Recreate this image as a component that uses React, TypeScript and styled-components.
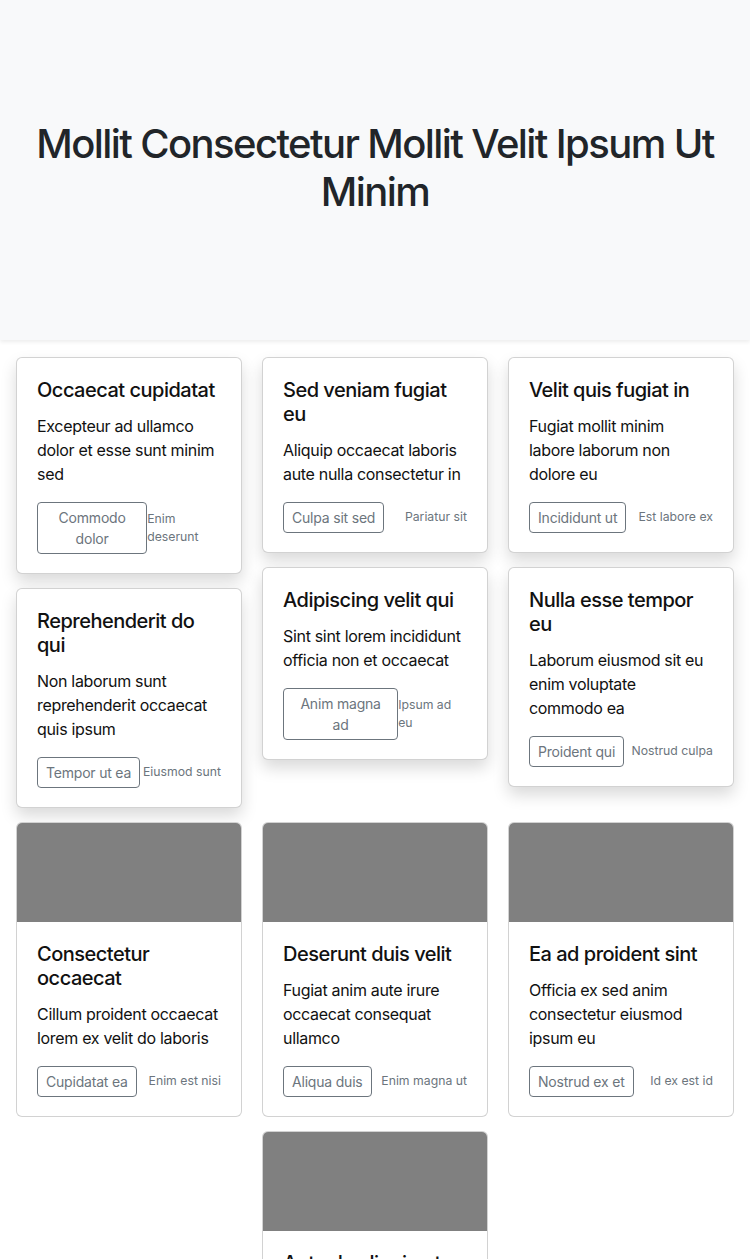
import styled, { createGlobalStyle } from "styled-components";

const GlobalStyle = createGlobalStyle`
	* {
		box-sizing: border-box;
	}
	body {
		margin: 0;
		background: #ffffff;
		color: #212529;
		font-family: Inter, "Noto Sans", "Liberation Sans", sans-serif;
		font-size: 16px;
		line-height: 1.5;
	}
`;

type CardData = {
	title: string;
	text: string;
	button: string;
	note: string;
};

const featured: CardData[] = [
	{
		title: "Occaecat cupidatat",
		text: "Excepteur ad ullamco dolor et esse sunt minim sed",
		button: "Commodo dolor",
		note: "Enim deserunt",
	},
	{
		title: "Sed veniam fugiat eu",
		text: "Aliquip occaecat laboris aute nulla consectetur in",
		button: "Culpa sit sed",
		note: "Pariatur sit",
	},
	{
		title: "Velit quis fugiat in",
		text: "Fugiat mollit minim labore laborum non dolore eu",
		button: "Incididunt ut",
		note: "Est labore ex",
	},
	{
		title: "Reprehenderit do qui",
		text: "Non laborum sunt reprehenderit occaecat quis ipsum",
		button: "Tempor ut ea",
		note: "Eiusmod sunt",
	},
	{
		title: "Adipiscing velit qui",
		text: "Sint sint lorem incididunt officia non et occaecat",
		button: "Anim magna ad",
		note: "Ipsum ad eu",
	},
	{
		title: "Nulla esse tempor eu",
		text: "Laborum eiusmod sit eu enim voluptate commodo ea",
		button: "Proident qui",
		note: "Nostrud culpa",
	},
];

const gallery: CardData[] = [
	{
		title: "Consectetur occaecat",
		text: "Cillum proident occaecat lorem ex velit do laboris",
		button: "Cupidatat ea",
		note: "Enim est nisi",
	},
	{
		title: "Deserunt duis velit",
		text: "Fugiat anim aute irure occaecat consequat ullamco",
		button: "Aliqua duis",
		note: "Enim magna ut",
	},
	{
		title: "Ea ad proident sint",
		text: "Officia ex sed anim consectetur eiusmod ipsum eu",
		button: "Nostrud ex et",
		note: "Id ex est id",
	},
	{
		title: "Aute do aliquip et",
		text: "Magna irure labore velit minim eiusmod nulla",
		button: "Dolor amet",
		note: "Sunt in culpa",
	},
];

const Hero = styled.section`
	display: flex;
	align-items: center;
	justify-content: center;
	height: 340px;
	padding: 0 16px;
	background-color: #f8f9fa;
	box-shadow: 0 0.125rem 0.25rem rgba(0, 0, 0, 0.075);
`;

const Heading = styled.h1`
	margin: 0 0 4px;
	font-size: 40px;
	font-weight: 500;
	line-height: 1.2;
	text-align: center;
	color: #212529;
	letter-spacing: -1.6px;
`;

const Container = styled.main`
	display: flex;
	flex-direction: column;
	gap: 14px;
	padding: 17px 16px 40px;
`;

const Masonry = styled.div`
	display: grid;
	grid-template-columns: repeat(3, 1fr);
	column-gap: 20px;
	align-items: start;
`;

const Column = styled.div`
	display: flex;
	flex-direction: column;
	gap: 14px;
`;

const Gallery = styled.div`
	display: flex;
	flex-wrap: wrap;
	justify-content: center;
	gap: 14px 20px;

	& > * {
		width: calc((100% - 40px) / 3);
	}
`;

const Card = styled.article<{ $raised?: boolean }>`
	display: flex;
	flex-direction: column;
	background: #ffffff;
	border: 1px solid rgba(0, 0, 0, 0.175);
	border-radius: 6px;
	overflow: hidden;
	box-shadow: ${(props) =>
		props.$raised ? "0 0.5rem 1rem rgba(0, 0, 0, 0.15)" : "none"};
`;

const Thumb = styled.div`
	height: 99px;
	background-color: #808080;
`;

const Body = styled.div`
	padding: 20px 20px 19px;
`;

const Title = styled.h5`
	margin: 0 0 12px;
	font-size: 20px;
	font-weight: 500;
	line-height: 1.2;
	color: #111111;
	letter-spacing: -0.5px;
`;

const Text = styled.p`
	margin: 0 0 16px;
	font-size: 16px;
	line-height: 24px;
	color: #111111;
	letter-spacing: -0.32px;
`;

const Footer = styled.div`
	display: flex;
	justify-content: space-between;
	align-items: center;
`;

const OutlineButton = styled.button`
	font-family: inherit;
	font-size: 14px;
	line-height: 1.5;
	letter-spacing: -0.2px;
	color: #6c757d;
	background: transparent;
	border: 1px solid #6c757d;
	border-radius: 4px;
	padding: 4px 8px;
	cursor: pointer;
`;

const Note = styled.small`
	font-size: 12.25px;
	line-height: 1.5;
	color: #6c757d;
`;

const CardItem = ({
	card,
	raised,
	image,
}: {
	card: CardData;
	raised?: boolean;
	image?: boolean;
}) => (
	<Card $raised={raised}>
		{image && <Thumb />}
		<Body>
			<Title>{card.title}</Title>
			<Text>{card.text}</Text>
			<Footer>
				<OutlineButton type="button">{card.button}</OutlineButton>
				<Note>{card.note}</Note>
			</Footer>
		</Body>
	</Card>
);

export default function App() {
	const columns = [0, 1, 2].map((c) => featured.filter((_, i) => i % 3 === c));

	return (
		<>
			<GlobalStyle />
			<Hero>
				<Heading>Mollit Consectetur Mollit Velit Ipsum Ut Minim</Heading>
			</Hero>
			<Container>
				<Masonry>
					{columns.map((col, c) => (
						<Column key={c}>
							{col.map((card) => (
								<CardItem key={card.title} card={card} raised />
							))}
						</Column>
					))}
				</Masonry>
				<Gallery>
					{gallery.map((card) => (
						<CardItem key={card.title} card={card} image />
					))}
				</Gallery>
			</Container>
		</>
	);
}
